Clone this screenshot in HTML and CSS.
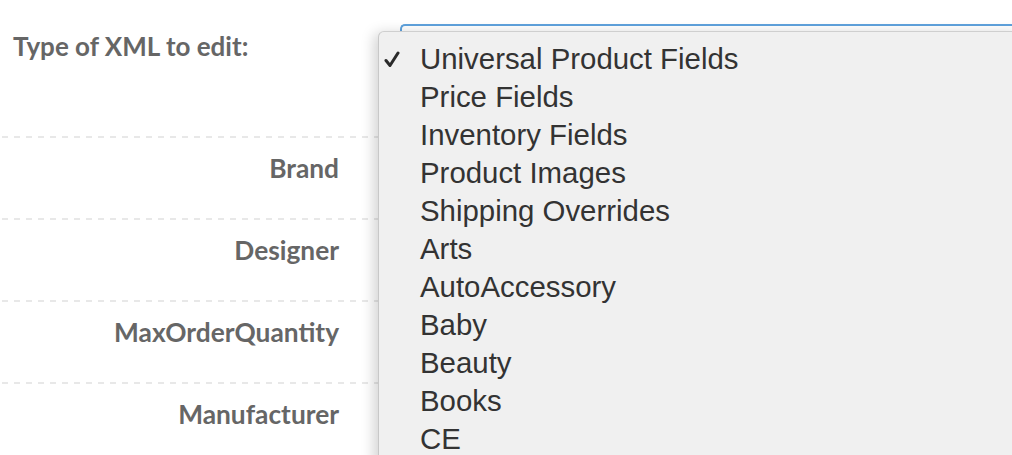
FILE: index.html
```html
<!DOCTYPE html>
<html>
<head>
<meta charset="utf-8">
<link rel="stylesheet" href="styles.css">
</head>
<body>
<div class="form">
  <div class="head">
    <label class="head-label">Type of XML to edit:</label>
    <div class="select"></div>
  </div>
  <div class="field"><div class="label">Brand</div></div>
  <div class="field"><div class="label">Designer</div></div>
  <div class="field"><div class="label">MaxOrderQuantity</div></div>
  <div class="field"><div class="label">Manufacturer</div></div>
</div>
<ul class="menu">
  <li class="item selected"><svg class="check" width="16" height="17" viewBox="0 0 16 17"><path d="M2 9.5 L6 14.5 L14 2" fill="none" stroke="#2a2a2a" stroke-width="3" stroke-linecap="round" stroke-linejoin="round"/></svg>Universal Product Fields</li>
  <li class="item">Price Fields</li>
  <li class="item">Inventory Fields</li>
  <li class="item">Product Images</li>
  <li class="item">Shipping Overrides</li>
  <li class="item">Arts</li>
  <li class="item">AutoAccessory</li>
  <li class="item">Baby</li>
  <li class="item">Beauty</li>
  <li class="item">Books</li>
  <li class="item">CE</li>
</ul>
</body>
</html>
```
FILE: styles.css
```css
html, body {
  margin: 0;
  padding: 0;
  background: #fff;
  overflow: hidden;
  height: 455px;
}
.form {
  font-family: Lato, "Open Sans", sans-serif;
  font-weight: 700;
  color: #666;
}
.head {
  height: 136px;
  display: grid;
  grid-template-columns: 400px 1fr;
}
.head-label {
  padding: 30px 0 0 13px;
  font-size: 26px;
  line-height: 32px;
}
.select {
  margin-top: 24px;
  height: 60px;
  border-top: 2px solid #5fa2dd;
  border-left: 2px solid #5fa2dd;
  border-top-left-radius: 5px;
}
.field {
  height: 80px;
  padding-top: 2px;
  background: repeating-linear-gradient(90deg, transparent 0 2px, #e8e8e8 2px 8px, transparent 8px 12px) top left / 100% 2px no-repeat;
}
.label {
  width: 339px;
  text-align: right;
  padding-top: 14px;
  font-size: 26.3px;
  line-height: 32px;
}
.menu {
  position: absolute;
  left: 378px;
  top: 31px;
  right: -10px;
  bottom: -10px;
  margin: 0;
  padding: 8px 0 0 41px;
  list-style: none;
  background: #f0f0f0;
  border-top: 1px solid #cfcfcf;
  border-left: 1px solid #c8c8c8;
  border-top-left-radius: 6px;
  box-shadow: -4px 2px 14px rgba(0, 0, 0, 0.18);
  font-family: "Liberation Sans", Arial, sans-serif;
  font-size: 29.4px;
  line-height: 38px;
  color: #333;
}
.item {
  position: relative;
  white-space: nowrap;
}
.check {
  position: absolute;
  left: -36px;
  top: 11px;
}
```
